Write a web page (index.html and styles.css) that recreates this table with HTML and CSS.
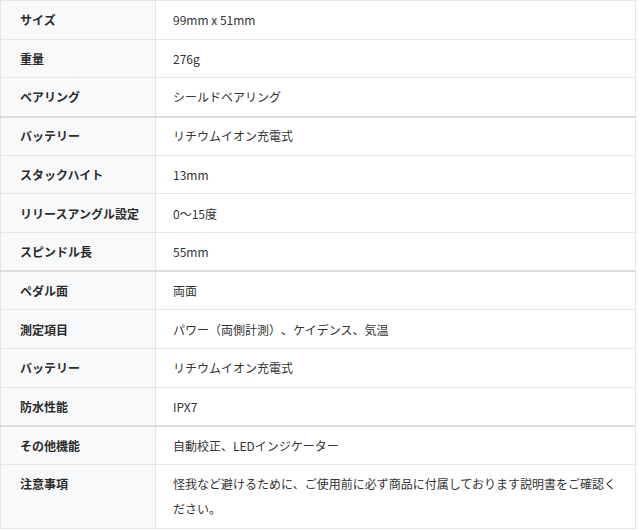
FILE: index.html
```html
<!DOCTYPE html>
<html lang="ja">
<head>
<meta charset="utf-8">
<link rel="stylesheet" href="styles.css">
</head>
<body>
<table class="spec">
  <colgroup>
    <col class="col-label">
    <col class="col-value">
  </colgroup>
  <tbody>
    <tr><th>サイズ</th><td>99mm x 51mm</td></tr>
    <tr><th>重量</th><td>276g</td></tr>
    <tr><th>ベアリング</th><td>シールドベアリング</td></tr>
    <tr class="grp"><th>バッテリー</th><td>リチウムイオン充電式</td></tr>
    <tr><th>スタックハイト</th><td>13mm</td></tr>
    <tr><th>リリースアングル設定</th><td>0〜15度</td></tr>
    <tr><th>スピンドル長</th><td>55mm</td></tr>
    <tr class="grp"><th>ペダル面</th><td>両面</td></tr>
    <tr><th>測定項目</th><td>パワー（両側計測）、ケイデンス、気温</td></tr>
    <tr><th>バッテリー</th><td>リチウムイオン充電式</td></tr>
    <tr><th>防水性能</th><td>IPX7</td></tr>
    <tr class="grp"><th>その他機能</th><td>自動校正、LEDインジケーター</td></tr>
    <tr><th>注意事項</th><td>怪我など避けるために、ご使用前に必ず商品に付属しております説明書をご確認ください。</td></tr>
  </tbody>
</table>
</body>
</html>
```
FILE: styles.css
```css
html, body {
  margin: 0;
  padding: 0;
  background: #ffffff;
}
body {
  font-family: "Noto Sans CJK JP", "Noto Sans", sans-serif;
  font-size: 12px;
  color: #333333;
  text-spacing-trim: space-all;
}
.spec {
  width: 636px;
  border-collapse: collapse;
  table-layout: fixed;
  border: 1px solid #e3e3e3;
}
.col-label {
  width: 155px;
}
.spec th, .spec td {
  border: 1px solid #e6e6e6;
  line-height: 25px;
  padding: 6.3px 17px;
  vertical-align: top;
  text-align: left;
}
.spec th {
  background: #f8f9fa;
  font-weight: bold;
  padding-left: 19px;
  padding-right: 4px;
  color: #2b2b2b;
  white-space: nowrap;
}
.spec td {
  background: #ffffff;
  font-weight: normal;
}
.spec tr.grp th, .spec tr.grp td {
  border-top: 2px solid #dcdcdc;
  padding-top: 5.6px;
}
```
